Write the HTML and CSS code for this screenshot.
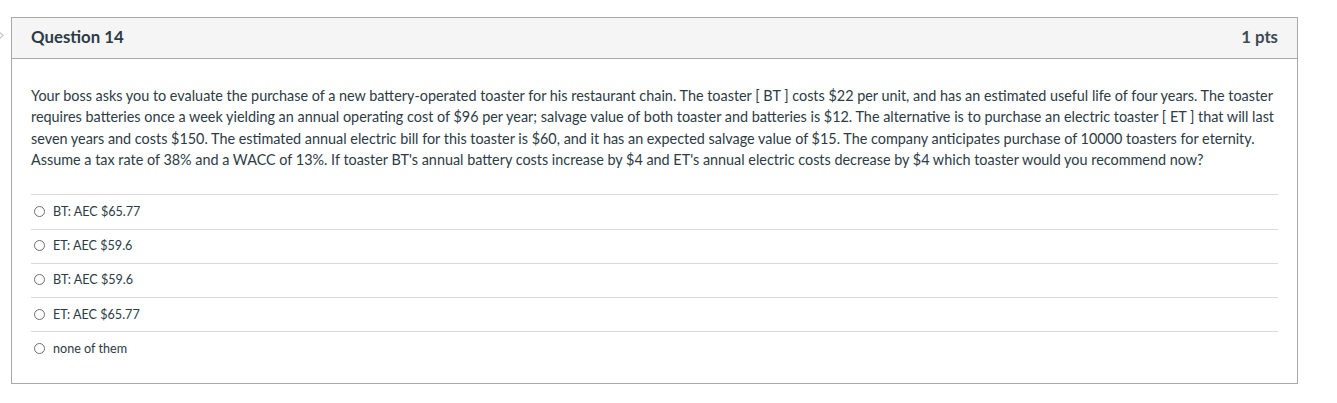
FILE: index.html
```html
<!DOCTYPE html>
<html lang="en">
<head>
<meta charset="utf-8">
<title>Question 14</title>
<link rel="stylesheet" href="styles.css">
</head>
<body>
<div class="page">
  <div class="gutter">
    <svg class="chev" width="11" height="60" viewBox="0 0 11 60"><path d="M-1.5 14.5 L3 18.5 L-1.5 22.5" fill="none" stroke="#c3c9cd" stroke-width="1.3"/></svg>
  </div>
  <div class="question">
    <div class="header">
      <span class="title">Question 14</span>
      <span class="pts">1 pts</span>
    </div>
    <div class="body">
      <p class="qtext">Your boss asks you to evaluate the purchase of a new battery-operated toaster for his restaurant chain. The toaster [ BT ] costs $22 per unit, and has an estimated useful life of four years. The toaster requires batteries once a week yielding an annual operating cost of $96 per year; salvage value of both toaster and batteries is $12. The alternative is to purchase an electric toaster [ ET ] that will last seven years and costs $150. The estimated annual electric bill for this toaster is $60, and it has an expected salvage value of $15. The company anticipates purchase of 10000 toasters for eternity. Assume a tax rate of 38% and a WACC of 13%. If toaster BT's annual battery costs increase by $4 and ET's annual electric costs decrease by $4 which toaster would you recommend now?</p>
      <div class="answers">
        <label class="answer"><span class="radio"></span><span>BT: AEC $65.77</span></label>
        <label class="answer"><span class="radio"></span><span>ET: AEC $59.6</span></label>
        <label class="answer"><span class="radio"></span><span>BT: AEC $59.6</span></label>
        <label class="answer"><span class="radio"></span><span>ET: AEC $65.77</span></label>
        <label class="answer"><span class="radio"></span><span>none of them</span></label>
      </div>
    </div>
  </div>
</div>
</body>
</html>
```

FILE: styles.css
```css
html, body {
  margin: 0;
  padding: 0;
  background: #ffffff;
}

body {
  font-family: Lato, "Open Sans", sans-serif;
  color: #2d3b45;
}

.page {
  display: flex;
  padding-top: 17px;
}

.gutter {
  width: 11px;
  flex: 0 0 11px;
}

.chev {
  display: block;
}

.question {
  width: 1285px;
  border: 1px solid #a9a9a9;
  background: #fff;
}

.header {
  display: flex;
  justify-content: space-between;
  align-items: center;
  height: 37px;
  padding: 0 19px 3px 19px;
  background: #f5f5f5;
  border-bottom: 1px solid #a9a9a9;
}

.title, .pts {
  font-size: 16.8px;
  font-weight: 700;
  color: #2d3b45;
}

.pts {
  color: #3d4a54;
}

.body {
  padding: 26px 19px 17px 19px;
}

.qtext {
  margin: 0;
  font-size: 14.4px;
  line-height: 21.33px;
}

.answers {
  margin-top: 24px;
}

.answer {
  display: flex;
  align-items: center;
  height: 33.25px;
  padding-bottom: 1px;
  box-sizing: border-box;
  height: 34.25px;
  border-top: 1px solid #dadada;
  font-size: 12.6px;
  color: #2d3b45;
}

.radio {
  width: 9px;
  height: 9px;
  border: 1px solid #6e6e6e;
  border-radius: 50%;
  margin-left: 3px;
  margin-right: 8px;
  flex: 0 0 auto;
}
```
